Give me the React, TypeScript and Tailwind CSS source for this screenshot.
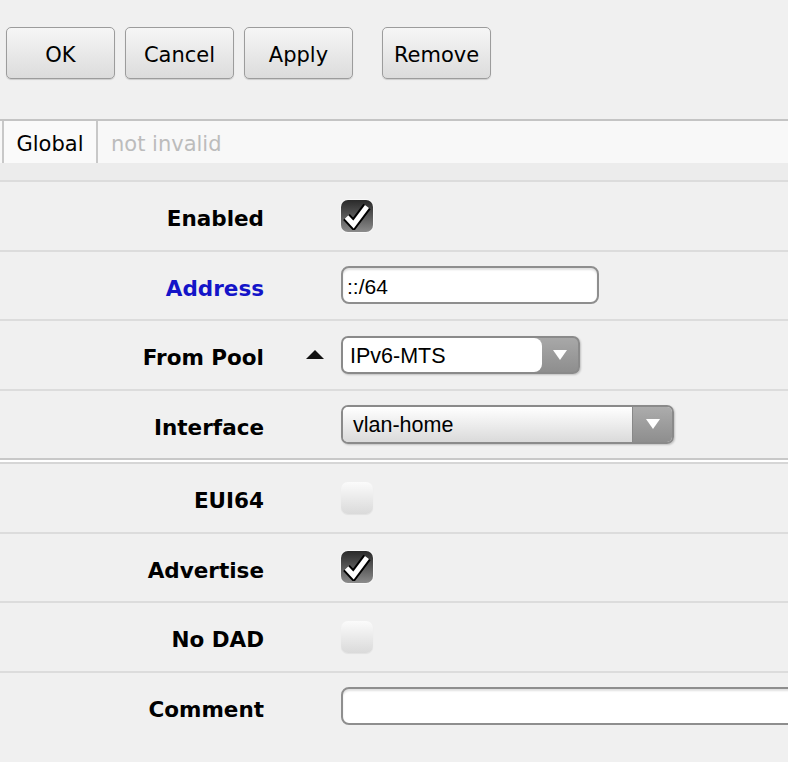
import React from "react";

const ui = { fontFamily: '"DejaVu Sans", Verdana, sans-serif' };
const field = { fontFamily: '"Liberation Sans", Arial, sans-serif' };

const ToolButton = ({ label, className = "" }: { label: string; className?: string }) => (
  <button
    className={`h-[52px] w-[109px] rounded-[5px] border border-[#9c9c9c] bg-gradient-to-b from-[#f6f6f6] to-[#dcdcdc] pt-[5px] text-[21px] text-black shadow-[0_1px_1px_rgba(0,0,0,0.15)] ${className}`}
  >
    {label}
  </button>
);

const Check = ({ on }: { on: boolean }) =>
  on ? (
    <div className="flex h-[32px] w-[32px] items-center justify-center rounded-[7px] bg-gradient-to-b from-[#2a2a2a] to-[#8c8c8c] shadow-[0_0_0_1px_rgba(255,255,255,0.5)]">
      <svg width="30" height="28" viewBox="0 0 30 28">
        <path d="M4.5 15 L11.5 22.5 L25 4.5" fill="none" stroke="#000" strokeWidth="9" strokeLinejoin="miter" />
        <path d="M4.5 15 L11.5 22.5 L25 4.5" fill="none" stroke="#fff" strokeWidth="5" strokeLinejoin="miter" />
      </svg>
    </div>
  ) : (
    <div className="h-[32px] w-[32px] rounded-[7px] bg-gradient-to-b from-[#fbfbfb] to-[#dadada] shadow-[0_1px_1px_rgba(0,0,0,0.06)]" />
  );

const DownArrow = () => (
  <svg width="16" height="12" viewBox="0 0 16 12">
    <path d="M1 1 H15 L8 11 Z" fill="#fff" />
  </svg>
);

const Row = ({
  label,
  blue,
  mid,
  children,
}: {
  label: string;
  blue?: boolean;
  mid?: React.ReactNode;
  children: React.ReactNode;
}) => (
  <div className="flex h-[67.5px] items-center">
    <div
      className={`w-[264px] shrink-0 pt-[7px] text-right text-[21.5px] font-bold ${blue ? "text-[#1414c8]" : "text-black"}`}
    >
      {label}
    </div>
    <div className="flex w-[77px] shrink-0 justify-end pr-[16px]">{mid}</div>
    <div className="flex min-w-0 flex-1 items-center">{children}</div>
  </div>
);

const Divider = () => <div className="h-[2px] bg-[#dcdcdc]" />;

export default function App() {
  return (
    <div className="min-h-[762px] w-[788px] overflow-hidden bg-[#f0f0f0]" style={ui}>
      {/* toolbar */}
      <div className="flex pl-[6px] pt-[27px]">
        <ToolButton label="OK" />
        <ToolButton label="Cancel" className="ml-[10px]" />
        <ToolButton label="Apply" className="ml-[10px]" />
        <ToolButton label="Remove" className="ml-[29px]" />
      </div>

      {/* tab strip */}
      <div className="mt-[40px] border-t-2 border-[#c4c4c4]">
        <div className="flex h-[42px] bg-[#f8f8f8] pl-[2px]">
          <div className="flex w-[96px] items-center justify-center border-r-2 border-l-2 border-[#c8c8c8] bg-[#fafafa] pt-[5px] text-[21px] text-black">
            Global
          </div>
          <div className="flex items-center pl-[13px] pt-[5px] text-[21px] text-[#bcbcbc]">not invalid</div>
        </div>
      </div>
      <div className="h-[17px] bg-[#ececec]" />
      <Divider />

      <Row label="Enabled">
        <Check on />
      </Row>
      <Divider />
      <Row label="Address" blue>
        <div
          className="flex h-[38px] w-[258px] items-center rounded-[8px] border-2 border-[#8e8e8e] bg-white pl-[4px] pt-[3px] text-[21px] text-black shadow-[inset_0_2px_2px_rgba(0,0,0,0.12)]"
          style={field}
        >
          ::/64
        </div>
      </Row>
      <Divider />
      <Row
        label="From Pool"
        mid={
          <svg width="20" height="11" viewBox="0 0 20 11">
            <path d="M10 1 L19 10 H1 Z" fill="#111" />
          </svg>
        }
      >
        <div className="flex h-[38px] w-[239px] overflow-hidden rounded-[7px] border-2 border-[#8a8a8a] bg-gradient-to-b from-[#a8a8a8] to-[#8e8e8e] shadow-[1px_1px_2px_rgba(0,0,0,0.2)]">
          <div
            className="flex flex-1 items-center rounded-r-[8px] bg-white pl-[7px] pt-[2px] text-[21.5px] text-black"
            style={field}
          >
            IPv6-MTS
          </div>
          <div className="flex w-[36px] items-center justify-center">
            <DownArrow />
          </div>
        </div>
      </Row>
      <Divider />
      <Row label="Interface">
        <div className="flex h-[39px] w-[333px] overflow-hidden rounded-[7px] border-2 border-[#8a8a8a] shadow-[1px_1px_2px_rgba(0,0,0,0.2)]">
          <div
            className="flex flex-1 items-center bg-gradient-to-b from-white to-[#dadada] pl-[10px] pt-[2px] text-[21.5px] text-black"
            style={field}
          >
            vlan-home
          </div>
          <div className="flex w-[40px] items-center justify-center border-l border-[#888] bg-gradient-to-b from-[#acacac] to-[#8e8e8e]">
            <DownArrow />
          </div>
        </div>
      </Row>

      {/* section break */}
      <div className="h-[2px] bg-[#c8c8c8]" />
      <div className="h-[2px] bg-white" />
      <div className="h-[2px] bg-[#d6d6d6]" />

      <Row label="EUI64">
        <Check on={false} />
      </Row>
      <Divider />
      <Row label="Advertise">
        <Check on />
      </Row>
      <Divider />
      <Row label="No DAD">
        <Check on={false} />
      </Row>
      <Divider />
      <Row label="Comment">
        <div className="h-[38px] w-[470px] shrink-0 rounded-[8px] border-2 border-[#8e8e8e] bg-white shadow-[inset_0_2px_2px_rgba(0,0,0,0.12)]" />
      </Row>
    </div>
  );
}
